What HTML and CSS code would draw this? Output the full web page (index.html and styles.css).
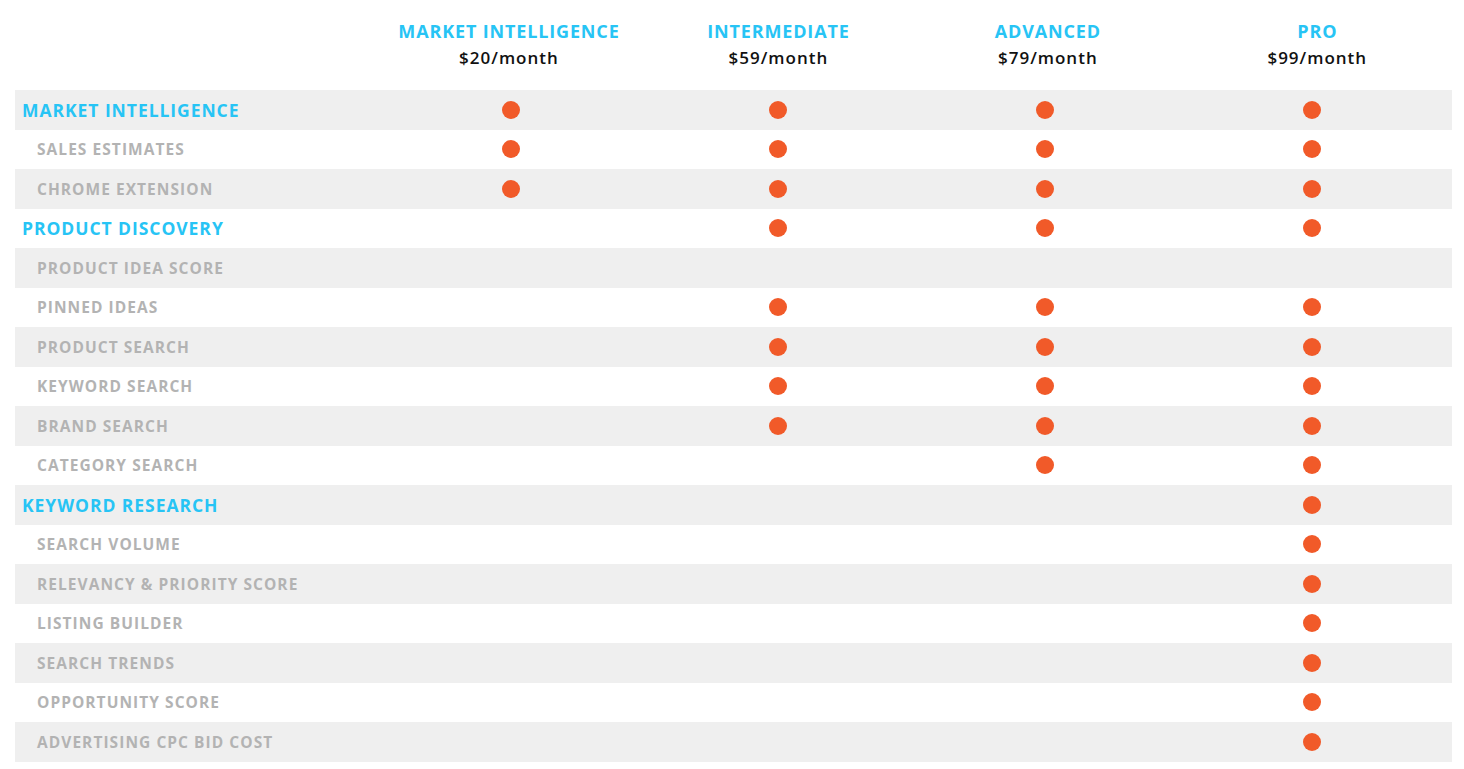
FILE: index.html
```html
<!DOCTYPE html>
<html>
<head>
<meta charset="utf-8">
<link rel="stylesheet" href="styles.css">
</head>
<body>
<div class="table">
  <div class="head">
    <div></div>
    <div class="plan"><div class="pname">MARKET INTELLIGENCE</div><div class="price">$20/month</div></div>
    <div class="plan"><div class="pname">INTERMEDIATE</div><div class="price">$59/month</div></div>
    <div class="plan"><div class="pname">ADVANCED</div><div class="price">$79/month</div></div>
    <div class="plan"><div class="pname">PRO</div><div class="price">$99/month</div></div>
  </div>
  <div class="rows">
    <div class="row cat"><div class="label">MARKET INTELLIGENCE</div><div class="c"><span class="dot"></span></div><div class="c"><span class="dot"></span></div><div class="c"><span class="dot"></span></div><div class="c"><span class="dot"></span></div></div>
    <div class="row"><div class="label">SALES ESTIMATES</div><div class="c"><span class="dot"></span></div><div class="c"><span class="dot"></span></div><div class="c"><span class="dot"></span></div><div class="c"><span class="dot"></span></div></div>
    <div class="row"><div class="label">CHROME EXTENSION</div><div class="c"><span class="dot"></span></div><div class="c"><span class="dot"></span></div><div class="c"><span class="dot"></span></div><div class="c"><span class="dot"></span></div></div>
    <div class="row cat"><div class="label">PRODUCT DISCOVERY</div><div class="c"></div><div class="c"><span class="dot"></span></div><div class="c"><span class="dot"></span></div><div class="c"><span class="dot"></span></div></div>
    <div class="row"><div class="label">PRODUCT IDEA SCORE</div><div class="c"></div><div class="c"></div><div class="c"></div><div class="c"></div></div>
    <div class="row"><div class="label">PINNED IDEAS</div><div class="c"></div><div class="c"><span class="dot"></span></div><div class="c"><span class="dot"></span></div><div class="c"><span class="dot"></span></div></div>
    <div class="row"><div class="label">PRODUCT SEARCH</div><div class="c"></div><div class="c"><span class="dot"></span></div><div class="c"><span class="dot"></span></div><div class="c"><span class="dot"></span></div></div>
    <div class="row"><div class="label">KEYWORD SEARCH</div><div class="c"></div><div class="c"><span class="dot"></span></div><div class="c"><span class="dot"></span></div><div class="c"><span class="dot"></span></div></div>
    <div class="row"><div class="label">BRAND SEARCH</div><div class="c"></div><div class="c"><span class="dot"></span></div><div class="c"><span class="dot"></span></div><div class="c"><span class="dot"></span></div></div>
    <div class="row"><div class="label">CATEGORY SEARCH</div><div class="c"></div><div class="c"></div><div class="c"><span class="dot"></span></div><div class="c"><span class="dot"></span></div></div>
    <div class="row cat"><div class="label">KEYWORD RESEARCH</div><div class="c"></div><div class="c"></div><div class="c"></div><div class="c"><span class="dot"></span></div></div>
    <div class="row"><div class="label">SEARCH VOLUME</div><div class="c"></div><div class="c"></div><div class="c"></div><div class="c"><span class="dot"></span></div></div>
    <div class="row"><div class="label">RELEVANCY &amp; PRIORITY SCORE</div><div class="c"></div><div class="c"></div><div class="c"></div><div class="c"><span class="dot"></span></div></div>
    <div class="row"><div class="label">LISTING BUILDER</div><div class="c"></div><div class="c"></div><div class="c"></div><div class="c"><span class="dot"></span></div></div>
    <div class="row"><div class="label">SEARCH TRENDS</div><div class="c"></div><div class="c"></div><div class="c"></div><div class="c"><span class="dot"></span></div></div>
    <div class="row"><div class="label">OPPORTUNITY SCORE</div><div class="c"></div><div class="c"></div><div class="c"></div><div class="c"><span class="dot"></span></div></div>
    <div class="row"><div class="label">ADVERTISING CPC BID COST</div><div class="c"></div><div class="c"></div><div class="c"></div><div class="c"><span class="dot"></span></div></div>
  </div>
</div>
</body>
</html>
```
FILE: styles.css
```css
html, body {
  margin: 0;
  padding: 0;
  background: #ffffff;
}
body {
  font-family: "Open Sans", "Liberation Sans", sans-serif;
  font-weight: 700;
}
.table {
  padding: 0 12px 0 15px;
}
.head {
  display: grid;
  grid-template-columns: 25% repeat(4, 18.75%);
  width: 1437px;
  height: 90px;
}
.plan {
  text-align: center;
  padding-top: 19px;
}
.pname {
  color: #27c4f5;
  font-size: 18px;
  line-height: 24px;
  letter-spacing: 0.85px;
}
.price {
  color: #111111;
  font-size: 17px;
  font-weight: 600;
  line-height: 24px;
  margin-top: 3px;
  letter-spacing: 1px;
}
.rows {
  width: 1437px;
}
.row {
  display: grid;
  grid-template-columns: 362px repeat(4, 267px);
  height: 39.5px;
  align-items: center;
}
.row:nth-child(odd) {
  background: #efefef;
}
.label {
  padding-left: 22px;
  color: #b3b3b3;
  font-size: 15.5px;
  letter-spacing: 1.05px;
  white-space: nowrap;
}
.cat .label {
  padding-left: 7px;
  color: #27c4f5;
  font-size: 17.5px;
  letter-spacing: 0.95px;
}
.c {
  display: flex;
  justify-content: center;
  align-items: center;
}
.dot {
  width: 18px;
  height: 18px;
  border-radius: 50%;
  background: #f15a29;
}
```
